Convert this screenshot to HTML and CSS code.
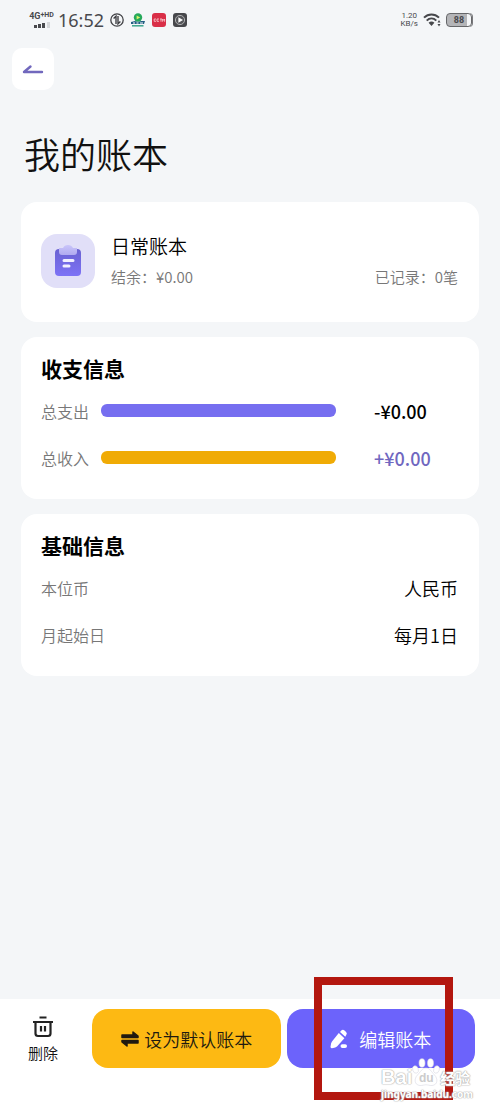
FILE: index.html
```html
<!DOCTYPE html>
<html lang="zh-CN">

<head>
  <meta charset="UTF-8">
  <meta name="viewport" content="width=device-width, initial-scale=1">
  <title>我的账本</title>
  <link rel="stylesheet" href="styles.css">
</head>

<body>

  <div class="status">
    <div class="signal">
      <div class="network">4G<small>+HD</small></div>
      <svg width="18" height="6" viewBox="0 0 18 6">
        <path d="M1 3h3v3H1zM5 2h3v4H5zM9 1h3v5H9z" fill="#48494d"/>
        <path d="M14 0h3v6h-3z" fill="#d5d7da"/>
      </svg>
    </div>
    <span class="time">16:52</span>
    <div class="apps">
      <svg width="14" height="14" viewBox="0 0 14 14" fill="none" stroke="#404145" stroke-width="1.3">
        <circle cx="7" cy="7" r="6.2"/>
        <path d="M3.600 5.400L6 3.200V11M8 3v7.800l2.400-2.200" stroke-width="1.400"/>
      </svg>
      <svg width="14" height="14" viewBox="0 0 14 14">
        <circle cx="7" cy="4.500" r="4.200" fill="#25a95b"/>
        <path d="M5.600 2.500l3.600 2-3.600 2z" fill="#d9f36b"/>
        <path d="M0 9l4-1 3 1 3-1 4 0-1 3H0z" fill="#235f83"/>
        <path d="M2 10h2M5.500 10h2M9 10h3" stroke="#fff" stroke-width="1"/>
        <path d="M1 12.800h11.500" stroke="#3ba58c" stroke-width="1.500"/>
      </svg>
      <svg width="14" height="14" viewBox="0 0 14 14">
        <rect width="14" height="14" rx="3" fill="#d92f48"/>
        <path d="M4 6H2.200v2.300H4M7 6H5v2.300h2M8 6h2M9 6v2.700M10.600 8.700V6l1 1.300 1-1.300v2.700" fill="none" stroke="#f7c5cb" stroke-width=".9"/>
      </svg>
      <svg width="14" height="14" viewBox="0 0 14 14">
        <rect width="14" height="14" rx="3" fill="#47484c"/>
        <circle cx="7" cy="7" r="4.600" fill="#55565a" stroke="#c9cacc" stroke-width=".8"/>
        <path d="M5.400 4.300L10 7l-4.600 2.700z" fill="#fff"/>
      </svg>
    </div>
    <div class="status-right">
      <span class="speed">1.20<br>KB/s</span>
      <svg width="18" height="14" viewBox="0 0 18 14" fill="none" stroke="#47484c" stroke-width="2">
        <path d="M1 4.600C5.400.4 11.600.4 16 4.600M3.700 7.600c2.800-2.700 6.800-2.700 9.600 0"/>
        <path d="M5.600 9.700c1.700-1.600 4.100-1.600 5.800 0L8.500 13z" fill="#47484c" stroke="none"/>
        <path d="M16 7l1.500 2.500h-3zM16 13.500l1.500-2.500h-3z" fill="#47484c" stroke="none"/>
      </svg>
      <span class="battery">88</span>
    </div>
  </div>

  <button type="button" class="back" aria-label="返回">
    <svg width="22" height="12" viewBox="0 0 22 12" fill="none" stroke="#7168bd" stroke-width="2.400" stroke-linecap="round" stroke-linejoin="round">
      <path d="M20 9H2L8.500 3.500"/>
    </svg>
  </button>

  <h1>我的账本</h1>

  <main>
    <section class="card book">
      <div class="book-icon">
        <svg width="28" height="34" viewBox="0 0 28 34">
          <defs>
            <linearGradient id="board" x2="0" y2="1">
              <stop stop-color="#6a62d2"/>
              <stop offset="1" stop-color="#7d72f6"/>
            </linearGradient>
            <linearGradient id="clip" x2="0" y2="1">
              <stop stop-color="#c9c5fa"/>
              <stop offset="1" stop-color="#b0aaf0"/>
            </linearGradient>
          </defs>
          <rect x="1" y="5" width="26" height="27" rx="4" fill="url(#board)"/>
          <path d="M5 4h4c1-2 2.500-3 5-3s4 1 5 3h4v4q0 3-3 3H8q-3 0-3-3z" fill="url(#clip)"/>
          <path d="M10 16.500h9M10 22h5" stroke="#f1f0ff" stroke-width="3" stroke-linecap="round"/>
        </svg>
      </div>
      <div class="book-text">
        <h2>日常账本</h2>
        <div class="book-meta">
          <span>结余：¥0.00</span>
          <span>已记录：0笔</span>
        </div>
      </div>
    </section>

    <section class="card">
      <h3>收支信息</h3>
      <div class="row">
        <span class="label">总支出</span>
        <div class="bar"></div>
        <span class="amount">-¥0.00</span>
      </div>
      <div class="row">
        <span class="label">总收入</span>
        <div class="bar bar-income"></div>
        <span class="amount amount-income">+¥0.00</span>
      </div>
    </section>

    <section class="card">
      <h3>基础信息</h3>
      <div class="row">
        <span class="label">本位币</span>
        <span class="value">人民币</span>
      </div>
      <div class="row">
        <span class="label">月起始日</span>
        <span class="value">每月1日</span>
      </div>
    </section>
  </main>

  <footer>
    <button type="button" class="delete">
      <svg width="22" height="22" viewBox="0 0 22 22" fill="none" stroke="#222" stroke-width="2.200" stroke-linejoin="round">
        <path d="M7.500 1.500h7M1 6h20M3.500 6v11.500q0 2.500 2.500 2.500h10q2.500 0 2.500-2.500V6"/>
        <path d="M9 10v5.500M13 10v5.500"/>
      </svg>
      删除
    </button>
    <button type="button" class="btn btn-default">
      <svg width="20" height="18" viewBox="0 0 20 18" fill="#201a10" stroke="#201a10" stroke-width="1.500" stroke-linejoin="round" stroke-linecap="round">
        <path d="M2 5h11V2l5 4v1.500H2zM18 10.500H2V12l5 4v-3h11z"/>
      </svg>
      设为默认账本
    </button>
    <div class="edit-wrap">
      <button type="button" class="btn btn-edit">
        <svg width="18" height="20" viewBox="0 0 18 20" fill="#fff">
          <path d="M8.800 4l5.600 5.200-7.400 8.300q-1 1-5 1.700-1.500 0-1.500-1.500.5-4.200 1.500-5.200z"/>
          <path d="M10 2.900L11.300 1.500q1.600-1.500 3.200 0l1.600 1.600q1.500 1.500 0 3.200L15.300 7.800z"/>
          <rect x="10.500" y="15.200" width="6.500" height="3.800" rx="1.900"/>
        </svg>
        编辑账本
      </button>
      <div class="highlight"></div>
    </div>
  </footer>

  <div class="watermark">
    <div class="brand">
      <span class="bai">Bai</span>
      <span class="paw">
        <svg width="28" height="30" viewBox="0 0 28 30" fill="#fff" stroke="#d9d9e2" stroke-width=".6">
          <ellipse cx="3.500" cy="11.500" rx="2.800" ry="3.800" transform="rotate(-20 3.500 11.500)"/>
          <ellipse cx="10" cy="5" rx="3" ry="4.300"/>
          <ellipse cx="18.500" cy="5" rx="3" ry="4.300"/>
          <ellipse cx="24.500" cy="11.500" rx="2.800" ry="3.800" transform="rotate(20 24.500 11.500)"/>
          <path d="M14 10c4 0 5.500 4 8.500 7 3.500 3.500 3.500 10-2.500 10.500-3 0-4-.7-6-.7s-3 .7-6 .7c-6-.5-6-7-2.500-10.500 3-3 4.500-7 8.500-7z"/>
        </svg>
        <b>du</b>
      </span>
      <span>经验</span>
    </div>
    <div class="site">jingyan.baidu.com</div>
  </div>

</body>

</html>
```
FILE: styles.css
```css
* {
  box-sizing: border-box;
}

body {
  margin: 0;
  min-height: 100vh;
  display: flex;
  flex-direction: column;
  position: relative;
  background: #f4f6f8;
  color: #000;
  font-family: "Noto Sans CJK SC", sans-serif;
  font-weight: 350;
}

h1,
h2,
h3 {
  margin: 0;
}

svg {
  display: block;
  flex-shrink: 0;
}

button {
  border: none;
  padding: 0;
  font-family: inherit;
  font-weight: inherit;
  cursor: pointer;
}

/* status bar */
.status {
  height: 39px;
  padding: 0 28px;
  display: flex;
  align-items: center;
  color: #48494d;
  font-family: Roboto, sans-serif;
}

.signal {
  width: 27px;
  display: flex;
  flex-direction: column;
  align-items: center;
  gap: 1px;
}

.network {
  display: flex;
  font-size: 9px;
  font-weight: 700;
  line-height: 9px;
}

.network small {
  font-size: 7px;
  line-height: 7px;
}

.time {
  margin-left: 3px;
  font-family: "Noto Sans", sans-serif;
  font-size: 18px;
  font-weight: 400;
}

.apps {
  margin-left: 6px;
  display: flex;
  gap: 7px;
}

.status-right {
  margin-left: auto;
  display: flex;
  align-items: center;
  gap: 5px;
}

.speed {
  font-size: 8px;
  line-height: 8px;
  font-weight: 400;
  text-align: center;
}

.battery {
  width: 26px;
  height: 14px;
  border: 1px solid #66676a;
  border-radius: 4px;
  background: linear-gradient(to right, #b4b5b8 84%, #f4f6f8 84%);
  box-shadow: 1px 0 0 #77787b;
  font-size: 9px;
  line-height: 12px;
  font-weight: 700;
  text-align: center;
}

.back {
  width: 42px;
  height: 42px;
  margin: 9px 0 0 12px;
  display: flex;
  align-items: center;
  justify-content: center;
  background: #fff;
  border-radius: 10px;
}

h1 {
  margin: 37px 24px 23px;
  font-size: 36px;
  line-height: 52px;
  font-weight: 350;
  color: #111;
}

main {
  flex: 1;
  padding: 0 21px;
  display: flex;
  flex-direction: column;
  gap: 15px;
}

.card {
  padding: 15px 21px 18px 20px;
  background: #fff;
  border-radius: 16px;
}

/* account book */
.book {
  height: 120px;
  display: flex;
  align-items: center;
  gap: 16px;
}

.book-icon {
  width: 54px;
  height: 54px;
  display: flex;
  align-items: center;
  justify-content: center;
  background: #e1dff8;
  border-radius: 16px;
}

.book-text {
  flex: 1;
}

.book-text h2 {
  font-size: 19px;
  line-height: 32px;
  font-weight: 350;
}

.book-meta {
  display: flex;
  justify-content: space-between;
  font-size: 15px;
  line-height: 30px;
  color: #777;
}

h3 {
  margin-bottom: 3px;
  font-size: 21px;
  line-height: 32px;
  font-weight: 700;
}

.row {
  height: 47px;
  display: flex;
  align-items: center;
}

.label {
  font-size: 16px;
  color: #777;
}

.bar {
  flex: 1;
  height: 13px;
  margin: 0 38px 0 12px;
  border-radius: 6px;
  background: #766ef0;
}

.bar-income {
  background: #f0ab05;
}

.amount {
  width: 84px;
  font-size: 18px;
  font-weight: 500;
}

.amount-income {
  color: #7067c0;
}

.value {
  margin-left: auto;
  font-size: 18px;
}

/* bottom buttons */
footer {
  height: 112px;
  padding: 10px 25px 0 0;
  display: flex;
  background: #fff;
}

.delete {
  width: 86px;
  height: 59px;
  margin-right: 6px;
  display: flex;
  flex-direction: column;
  align-items: center;
  justify-content: center;
  gap: 3px;
  background: none;
  font-size: 15px;
  line-height: 24px;
  color: #111;
}

.delete svg {
  margin-top: 4px;
}

.btn {
  height: 59px;
  display: flex;
  align-items: center;
  justify-content: center;
  border-radius: 16px;
  font-size: 18px;
}

.btn-default {
  flex: 1;
  gap: 4px;
  margin-right: 6px;
  background: #fdb913;
  color: #201a10;
}

.edit-wrap {
  flex: 1;
  position: relative;
}

.btn-edit {
  width: 100%;
  gap: 11px;
  background: #6c63fb;
  color: #fff;
}

.highlight {
  position: absolute;
  top: -32px;
  bottom: 11px;
  left: 27px;
  right: 22px;
  border: 8px solid #b3170f;
  pointer-events: none;
}

.watermark {
  position: absolute;
  right: 27px;
  bottom: 10px;
  color: #fff;
  font-weight: 700;
  pointer-events: none;
  text-shadow: 0 0 1px #aaa, 0 0 1px #aaa, 0 0 2px #ccc;
}

.brand {
  display: flex;
  align-items: center;
  height: 20px;
  font-size: 15px;
}

.bai {
  font-family: "Liberation Sans", sans-serif;
  font-size: 20px;
}

.paw {
  position: relative;
  margin-top: -8px;
}

.paw b {
  position: absolute;
  left: 0;
  right: 0;
  bottom: 3px;
  font-family: "Liberation Sans", sans-serif;
  font-size: 12px;
  line-height: 14px;
  text-align: center;
  color: #ccc;
  text-shadow: none;
}

.site {
  font-family: "Noto Sans", sans-serif;
  font-size: 10px;
  line-height: 14px;
}
```
